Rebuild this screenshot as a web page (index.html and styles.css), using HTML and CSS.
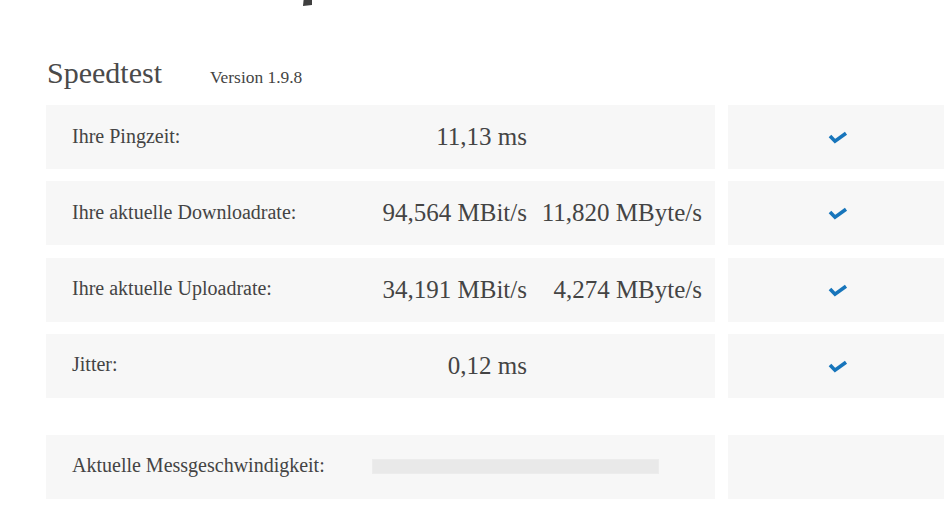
FILE: index.html
```html
<!DOCTYPE html>
<html lang="de">
<head>
<meta charset="utf-8">
<title>Speedtest</title>
<link rel="stylesheet" href="styles.css">
</head>
<body>
<div class="page">
  <div class="top-strip">
    <svg class="top-glyph" width="10" height="6" viewBox="0 0 10 6"><polygon points="0.6,0 9,0 9,5 0,6" fill="#3f3f3f"/></svg>
  </div>
  <div class="title">
    <h1 class="title-main">Speedtest</h1>
    <span class="title-version">Version 1.9.8</span>
  </div>

  <div class="row">
    <div class="box main-box">
      <span class="label">Ihre Pingzeit:</span>
      <span class="value col2">11,13 ms</span>
      <span class="value col3"></span>
    </div>
    <div class="box status-box">
      <svg class="check" width="20" height="13" viewBox="0 0 20 13"><polyline points="2,5 7,10.2 18,2.2" fill="none" stroke="#1775bb" stroke-width="3.6"/></svg>
    </div>
  </div>

  <div class="row">
    <div class="box main-box">
      <span class="label">Ihre aktuelle Downloadrate:</span>
      <span class="value col2">94,564 MBit/s</span>
      <span class="value col3">11,820 MByte/s</span>
    </div>
    <div class="box status-box">
      <svg class="check" width="20" height="13" viewBox="0 0 20 13"><polyline points="2,5 7,10.2 18,2.2" fill="none" stroke="#1775bb" stroke-width="3.6"/></svg>
    </div>
  </div>

  <div class="row">
    <div class="box main-box">
      <span class="label">Ihre aktuelle Uploadrate:</span>
      <span class="value col2">34,191 MBit/s</span>
      <span class="value col3">4,274 MByte/s</span>
    </div>
    <div class="box status-box">
      <svg class="check" width="20" height="13" viewBox="0 0 20 13"><polyline points="2,5 7,10.2 18,2.2" fill="none" stroke="#1775bb" stroke-width="3.6"/></svg>
    </div>
  </div>

  <div class="row">
    <div class="box main-box">
      <span class="label">Jitter:</span>
      <span class="value col2">0,12 ms</span>
      <span class="value col3"></span>
    </div>
    <div class="box status-box">
      <svg class="check" width="20" height="13" viewBox="0 0 20 13"><polyline points="2,5 7,10.2 18,2.2" fill="none" stroke="#1775bb" stroke-width="3.6"/></svg>
    </div>
  </div>

  <div class="row row-speed">
    <div class="box main-box">
      <span class="label">Aktuelle Messgeschwindigkeit:</span>
      <div class="progress"><div class="progress-fill" style="width:0%"></div></div>
    </div>
    <div class="box status-box"></div>
  </div>
</div>
</body>
</html>
```
FILE: styles.css
```css
html, body {
  margin: 0;
  padding: 0;
  background: #ffffff;
}

body {
  font-family: "Liberation Serif", "Times New Roman", serif;
  color: #444444;
}

.page {
  padding-left: 46px;
}

.top-strip {
  height: 6px;
  overflow: hidden;
}

.top-glyph {
  display: block;
  margin-left: 257px;
}

.title {
  display: flex;
  align-items: baseline;
  height: 35px;
  margin: 49px 0 15px 1px;
}

.title-main {
  margin: 0;
  font-size: 30px;
  font-weight: normal;
  color: #4a4a4a;
  line-height: 35px;
}

.title-version {
  margin-left: 48px;
  font-size: 17.4px;
  color: #444444;
}

.row {
  display: flex;
  gap: 13px;
  height: 64px;
  margin-bottom: 12.33px;
}

.row-speed {
  margin-top: 37px;
}

.box {
  background: #f7f7f7;
  height: 64px;
}

.main-box {
  width: 669px;
  box-sizing: border-box;
  padding: 0 13px 0 26px;
  display: grid;
  grid-template-columns: 300px 155px 175px;
  align-items: center;
}

.label {
  font-size: 20px;
  color: #444444;
  position: relative;
  top: -1px;
}

.value {
  font-size: 25px;
  text-align: right;
  color: #444444;
  white-space: nowrap;
}

.status-box {
  width: 216px;
  display: flex;
  align-items: center;
  justify-content: center;
}

.check {
  display: block;
  margin-left: 4px;
  margin-top: 1px;
}

.progress {
  grid-column: 2 / 4;
  width: 287px;
  height: 15px;
  background: #e9e9e9;
  box-sizing: border-box;
  border: 1px solid #ececec;
}

.progress-fill {
  height: 100%;
  background: #1775bb;
}
```
